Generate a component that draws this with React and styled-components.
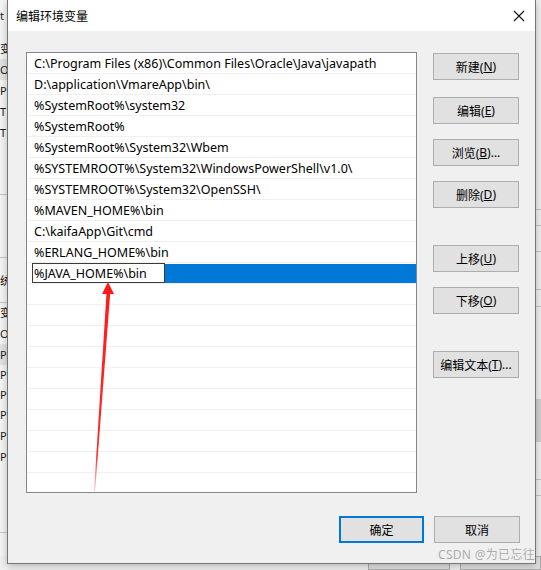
import styled, { createGlobalStyle } from "styled-components"

const GlobalStyle = createGlobalStyle`
    body {
        margin: 0;
        font-family: "Noto Sans", "Noto Sans CJK SC", sans-serif;
        background: #f0f0f0;
    }
`;

const Desktop = styled.div`
    position: relative;
    width: 541px;
    height: 570px;
    overflow: hidden;
    display: flex;
    flex-direction: column;
    background: #f0f0f0;
`;

const BackArea = styled.div`
    height: 563px;
    display: flex;
`;

const LeftStrip = styled.div`
    width: 8px;
    display: flex;
    flex-direction: column;
    background: #f5f5f5;
    overflow: hidden;
`;

const StripRow = styled.div`
    height: ${p => p.h}px;
    flex-shrink: 0;
    font-size: 11px;
    line-height: ${p => p.h}px;
    white-space: nowrap;
    overflow: hidden;
    color: #1a1a1a;
    background: ${p => p.shade ? "#e3e3e3" : "transparent"};
    border-bottom: ${p => p.line ? "1px solid #c8c8c8" : "none"};
    box-sizing: border-box;
`;

const Middle = styled.div`
    flex: 1;
`;

const RightStrip = styled.div`
    width: 6px;
    display: flex;
    flex-direction: column;
    background: #f0f0f0;
    border-left: 1px solid #d6d6d6;
`;

const RightBlock = styled.div`
    height: ${p => p.h}px;
    flex-shrink: 0;
    background: ${p => p.bg || "transparent"};
    border-bottom: ${p => p.line ? "1px solid #c4c4c4" : "none"};
    box-sizing: border-box;
`;

const BottomStrip = styled.div`
    flex: 1;
    display: flex;
    padding-left: 368px;
    gap: 10px;
`;

const BackButton = styled.div`
    width: ${p => p.w}px;
    height: 12px;
    border: 1px solid #adadad;
    background: #e1e1e1;
`;

const Dialog = styled.div`
    position: absolute;
    left: 7px;
    top: 0;
    width: 529px;
    height: 564px;
    box-sizing: border-box;
    border: 1px solid #767676;
    border-top: none;
    background: #f0f0f0;
    display: flex;
    flex-direction: column;
    box-shadow: 0 2px 8px rgba(0, 0, 0, 0.25);
`;

const TitleBar = styled.div`
    height: 31px;
    background: #ffffff;
    display: flex;
    align-items: center;
    justify-content: space-between;
    padding-left: 8px;
    padding-right: 10px;
`;

const Title = styled.div`
    font-size: 12px;
    color: #000;
    font-family: "Noto Sans CJK SC", sans-serif;
`;

const CloseButton = styled.div`
    width: 12px;
    height: 12px;
    display: flex;
`;

const Body = styled.div`
    display: grid;
    grid-template-columns: 391px 86px;
    column-gap: 16px;
    padding: 21px 15px 0 18px;
`;

const ListBox = styled.div`
    position: relative;
    height: 441px;
    box-sizing: border-box;
    border: 1px solid #828790;
    background: #ffffff;
    overflow: hidden;
`;

const Row = styled.div`
    height: 21px;
    box-sizing: border-box;
    border-bottom: 1px solid #f0f0f0;
    display: flex;
    align-items: center;
    padding-left: 7px;
    padding-top: 1px;
    font-size: 12.5px;
    color: #000;
    white-space: nowrap;
`;

const EditRow = styled.div`
    height: 21px;
    box-sizing: border-box;
    border-bottom: 1px solid #f0f0f0;
    display: flex;
    align-items: stretch;
    padding-left: 5px;
`;

const EditBox = styled.div`
    width: 133px;
    box-sizing: border-box;
    border: 1px solid #3c3c3c;
    background: #fff;
    padding-left: 1px;
    display: flex;
    align-items: center;
    font-size: 12.5px;
    color: #000;
    white-space: nowrap;
`;

const Selection = styled.div`
    flex: 1;
    margin: 1px 0 0 0;
    background: #0078d7;
`;

const ArrowLayer = styled.svg`
    position: absolute;
    left: 0;
    top: 0;
    pointer-events: none;
`;

const ButtonColumn = styled.div`
    display: flex;
    flex-direction: column;
    padding-top: 1px;
`;

const Button = styled.div`
    height: 27px;
    margin-top: ${p => p.mt || 0}px;
    box-sizing: border-box;
    border: ${p => p.primary ? "2px solid #0078d7" : "1px solid #adadad"};
    background: #e1e1e1;
    display: flex;
    align-items: center;
    justify-content: center;
    font-size: 12px;
    color: #000;
    font-family: "Noto Sans", "Noto Sans CJK SC", sans-serif;
    width: ${p => p.w ? p.w + "px" : "auto"};
`;

const Key = styled.span`
    text-decoration: underline;
`;

const Footer = styled.div`
    display: flex;
    justify-content: flex-end;
    gap: 10px;
    padding: 23px 15px 0 0;
`;

const Watermark = styled.div`
    position: absolute;
    right: 6px;
    bottom: 7px;
    font-size: 12px;
    color: rgba(150, 150, 150, 0.75);
    font-family: "Noto Sans", "Noto Sans CJK SC", sans-serif;
    letter-spacing: 0.3px;
`;

const paths = [
    "C:\\Program Files (x86)\\Common Files\\Oracle\\Java\\javapath",
    "D:\\application\\VmareApp\\bin\\",
    "%SystemRoot%\\system32",
    "%SystemRoot%",
    "%SystemRoot%\\System32\\Wbem",
    "%SYSTEMROOT%\\System32\\WindowsPowerShell\\v1.0\\",
    "%SYSTEMROOT%\\System32\\OpenSSH\\",
    "%MAVEN_HOME%\\bin",
    "C:\\kaifaApp\\Git\\cmd",
    "%ERLANG_HOME%\\bin",
];

// slivers of the window lying behind the dialog
const leftRows = [
    { h: 31, t: "t" },
    { h: 7 },
    { h: 21, t: "变" },
    { h: 21, t: "O", shade: true },
    { h: 21, t: "P" },
    { h: 21, t: "T" },
    { h: 21, t: "T" },
    { h: 52, line: true },
    { h: 63, line: true },
    { h: 45, t: "统", line: true },
    { h: 20, t: "变" },
    { h: 21, t: "O" },
    { h: 21, t: "P", shade: true },
    { h: 20, t: "P" },
    { h: 20, t: "P" },
    { h: 20, t: "P" },
    { h: 21, t: "P" },
    { h: 21, t: "P" },
    { h: 66, line: true },
];

export default function App() {
    const emptyRows = Array.from({ length: 10 });

    return (
        <>
            <GlobalStyle />
            <Desktop>
                <BackArea>
                    <LeftStrip>
                        {leftRows.map((r, i) => (
                            <StripRow key={i} h={r.h} shade={r.shade} line={r.line}>{r.t}</StripRow>
                        ))}
                    </LeftStrip>
                    <Middle />
                    <RightStrip>
                        <RightBlock h={210} line />
                        <RightBlock h={16} line />
                        <RightBlock h={26} line />
                        <RightBlock h={38} line />
                        <RightBlock h={17} line />
                        <RightBlock h={92} />
                        <RightBlock h={43} bg="#d0d0d0" />
                        <RightBlock h={38} line />
                        <RightBlock h={16} line />
                    </RightStrip>
                </BackArea>
                <BottomStrip>
                    <BackButton w={85} />
                    <BackButton w={85} />
                </BottomStrip>

                <Dialog>
                    <TitleBar>
                        <Title>编辑环境变量</Title>
                        <CloseButton>
                            <svg width="12" height="12" viewBox="0 0 12 12">
                                <path d="M1 1 L11 11 M11 1 L1 11" stroke="#111" strokeWidth="1.1" fill="none" />
                            </svg>
                        </CloseButton>
                    </TitleBar>
                    <Body>
                        <ListBox>
                            {paths.map(p => <Row key={p}>{p}</Row>)}
                            <EditRow>
                                <EditBox>%JAVA_HOME%\bin</EditBox>
                                <Selection />
                            </EditRow>
                            {emptyRows.map((_, i) => <Row key={"e" + i} />)}
                            <ArrowLayer width="391" height="441" viewBox="0 0 391 441">
                                <defs>
                                    <linearGradient id="fade" x1="0" y1="0" x2="0" y2="1">
                                        <stop offset="0" stopColor="#ff1a1a" stopOpacity="1" />
                                        <stop offset="0.8" stopColor="#ff2020" stopOpacity="0.95" />
                                        <stop offset="1" stopColor="#ff4040" stopOpacity="0.1" />
                                    </linearGradient>
                                </defs>
                                <polygon points="81,229 75,241 87,241" fill="#ff1a1a" />
                                <polygon points="79.5,240 83.2,240 67.6,445 66.6,445" fill="url(#fade)" />
                            </ArrowLayer>
                        </ListBox>
                        <ButtonColumn>
                            <Button>新建(<Key>N</Key>)</Button>
                            <Button mt={17}>编辑(<Key>E</Key>)</Button>
                            <Button mt={15}>浏览(<Key>B</Key>)...</Button>
                            <Button mt={15}>删除(<Key>D</Key>)</Button>
                            <Button mt={37}>上移(<Key>U</Key>)</Button>
                            <Button mt={15}>下移(<Key>O</Key>)</Button>
                            <Button mt={37}>编辑文本(<Key>T</Key>)...</Button>
                        </ButtonColumn>
                    </Body>
                    <Footer>
                        <Button primary w={85}>确定</Button>
                        <Button w={86}>取消</Button>
                    </Footer>
                </Dialog>
                <Watermark>CSDN @为已忘往</Watermark>
            </Desktop>
        </>
    )
}
